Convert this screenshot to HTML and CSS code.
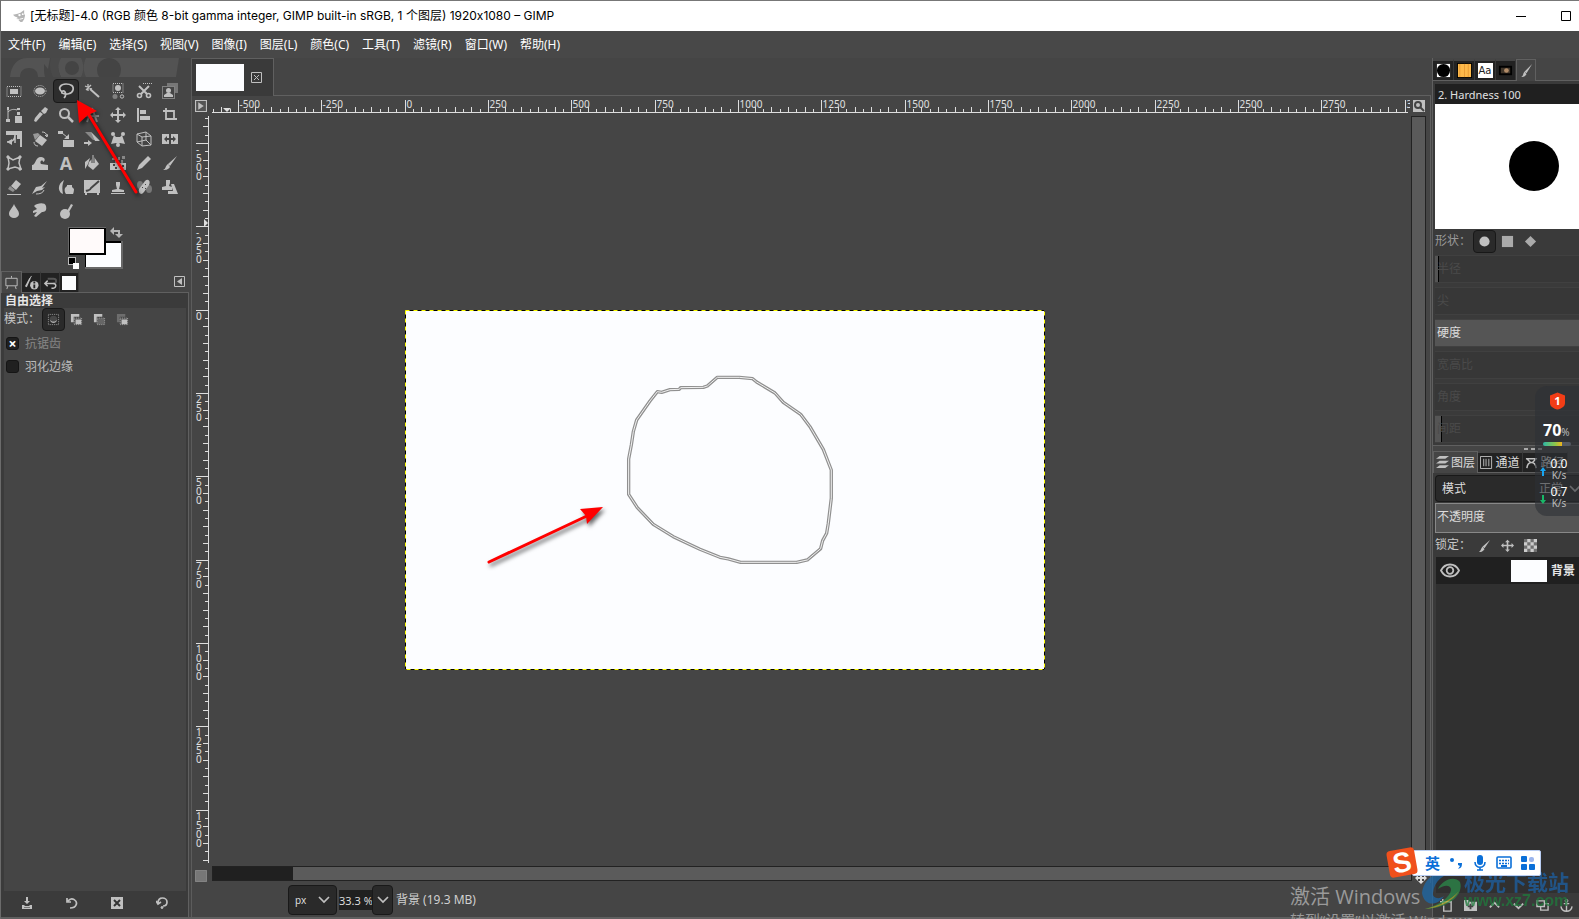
FILE: index.html
```html
<!DOCTYPE html>
<html lang="zh-CN">
<head>
<meta charset="utf-8">
<title>GIMP</title>
<link rel="stylesheet" href="styles.css">
</head>
<body>
<header class="titlebar">
  <svg class="app-icon" viewBox="0 0 14 14"><path d="M0 5l5-1 3-1 4-3v4l1 2-1 4-2 3H8l-3-3H3l2-2-3-1z" fill="#b5b5b5"/><circle cx="7" cy="5.500" r="1.300" fill="#fff"/><circle cx="10.500" cy="4.500" r="1" fill="#fff"/><path d="M1 9l5 1-1 1zM7 10l4-1" stroke="#fff" fill="none"/></svg>
  <h1 class="title">[无标题]-4.0 (RGB 颜色 8-bit gamma integer, GIMP built-in sRGB, 1 个图层) 1920x1080 – GIMP</h1>
  <button class="winbtn" aria-label="最小化"><svg viewBox="0 0 10 10"><path d="M0 5.500h10" stroke="#000"/></svg></button>
  <button class="winbtn" aria-label="最大化"><svg viewBox="0 0 10 10"><path d="M.5.5h9v9h-9z" stroke="#000" fill="none"/></svg></button>
</header>
<nav class="menubar">
  <button>文件(F)</button><button>编辑(E)</button><button>选择(S)</button><button>视图(V)</button><button>图像(I)</button><button>图层(L)</button><button>颜色(C)</button><button>工具(T)</button><button>滤镜(R)</button><button>窗口(W)</button><button>帮助(H)</button>
</nav>

<main class="workspace">
  <aside class="left-dock">
    <svg class="banner" viewBox="0 0 176 19"><path d="M0 19C1 7 8 0 17 0h23l-2 11-4-5c0 6 0 9 1 13h-7c0-6-4-9-9-9s-9 3-9 9zM49 0h120l-3 19H51c-3-7-4-12-2-19z" fill="#535353"/><path d="M41 0h10c-4 7-3 13 0 19h-8c-3-7-4-13-2-19zM71 0h5c-3 6-3 13 0 19h-5c3-6 3-13 0-19z" fill="#494949"/><circle cx="62" cy="10" r="7" fill="#444"/><circle cx="99" cy="12" r="12" fill="#444"/></svg>
    <div class="toolbox">
      <button aria-label="矩形选择"><svg viewBox="0 0 16 16"><path d="M1 3.500h14v10H1z" fill="none" stroke="#c0c0c0" stroke-dasharray="1 1"/><path d="M4 6h8v5H4z"/></svg></button>
      <button aria-label="椭圆选择"><svg viewBox="0 0 16 16"><ellipse cx="8" cy="8" rx="5" ry="3.500"/><ellipse cx="8" cy="8" rx="6" ry="5.500" fill="none" stroke="#c0c0c0" stroke-dasharray="1 1"/></svg></button>
      <button class="active" aria-label="自由选择"><svg viewBox="0 0 16 16" class="line"><path d="M4 9C-1 5 3 1 8 1s8 2 7 6-7 5-11 3c-1-2 2-3 3-1s1 4-1 6" stroke-width="1.700"/></svg></button>
      <button aria-label="模糊选择"><svg viewBox="0 0 16 16" class="line"><path d="M6 6l9 8" stroke-width="2"/><path d="M4 1v7M1 3l7 3M7 2L2 7" stroke-width="1.300"/></svg></button>
      <button aria-label="按颜色选择"><svg viewBox="0 0 16 16"><path d="M3 .5h10v9H3z" fill="none" stroke="#c0c0c0" stroke-dasharray="1 1"/><circle cx="8" cy="5" r="3"/><circle cx="5" cy="13.500" r="2.500" fill="#808080"/><circle cx="12" cy="13.500" r="1.700" class="stroke"/></svg></button>
      <button aria-label="剪刀选择"><svg viewBox="0 0 16 16" class="line"><path d="M3 3l8 8M13 3l-8 8" stroke-width="2"/><circle cx="3.500" cy="12.500" r="2" stroke-width="1.600"/><circle cx="12.500" cy="12.500" r="2" stroke-width="1.600"/><path d="M7 .5h9" stroke-dasharray="1 1"/></svg></button>
      <button aria-label="前景选择"><svg viewBox="0 0 16 16"><path d="M5 0h11v10h-3V3H5z" fill="#777"/><path d="M.5 3.500h12v12H.5z" fill="none" stroke="#c0c0c0" stroke-dasharray="1 1"/><circle cx="6.500" cy="7.500" r="2.500"/><path d="M2 14v-2l3-2h3l3 2v2z"/></svg></button>

      <button aria-label="路径"><svg viewBox="0 0 16 16"><path d="M2 1v13M2 5c3-3 6-3 9-2" class="stroke"/><path d="M1 0h2v3H1zM0 12h4v3H0zM11 1h3v2h-3zM11 5h3v3h-3zM9 9h7v7H9z"/></svg></button>
      <button aria-label="颜色拾取"><svg viewBox="0 0 16 16"><path d="M10 3l3-3 3 2-2 4-2 1-3-3zM8 5l3 2-7 8-2-1 1-3z"/></svg></button>
      <button aria-label="缩放"><svg viewBox="0 0 16 16" class="line"><circle cx="6.500" cy="6.500" r="4.500" stroke-width="2"/><path d="M10 10l5 5" stroke-width="2.500"/></svg></button>
      <button aria-label="测量"><svg viewBox="0 0 16 16" class="line dim"><path d="M8 1L3 15M8 1l5 14M1 9h14" stroke-width="2"/></svg></button>
      <button aria-label="移动"><svg viewBox="0 0 16 16"><path d="M8 0l3 3H9v4h4V5l3 3-3 3V9H9v4h2l-3 3-3-3h2V9H3v2L0 8l3-3v2h4V3H5z"/></svg></button>
      <button aria-label="对齐"><svg viewBox="0 0 16 16"><path d="M1 1h2v14H1zM4 3h6v4H4zM4 9h10v4H4z"/></svg></button>
      <button aria-label="裁剪"><svg viewBox="0 0 16 16" class="line"><path d="M1 4h11v9M4 1v11h11" stroke-width="1.800"/></svg></button>

      <button aria-label="统一变换"><svg viewBox="0 0 16 16"><path d="M0 0h16v4H0zM11 4h5v12h-2V8h-3z"/><path d="M9 3v9M1 11c5 0 8-2 8-7" class="stroke" stroke-width="1.500"/><path d="M6 8v6l-5-3z"/></svg></button>
      <button aria-label="旋转"><svg viewBox="0 0 16 16"><path d="M8 4l7 5-5 6-7-5z"/><path d="M1 3l5-1 2 2-5 5z" fill="#989898"/><path d="M2 11c0 2 1 4 4 4M10 1c3 0 4 1 5 4M13 4l2 2 1-3" class="stroke"/></svg></button>
      <button aria-label="缩放变换"><svg viewBox="0 0 16 16"><path d="M0 0h5v3H0zM5 9h11v7H5zM11 3v5H6z"/><path d="M4 2l5 4" class="stroke"/></svg></button>
      <button aria-label="剪切"><svg viewBox="0 0 16 16"><path d="M1 1h6l8 8H9z" fill="#888"/><path d="M7 1l9 9h-5zM0 11h4V9l4 3-4 3v-2H0z"/></svg></button>
      <button aria-label="透视"><svg viewBox="0 0 16 16"><circle cx="3" cy="3" r="2"/><circle cx="13" cy="3" r="2"/><path d="M4 4l2 2h4l2-2 3 9-5-1-2 1-2-1-5 1z"/><circle cx="8" cy="14" r="2"/></svg></button>
      <button aria-label="三维变换"><svg viewBox="0 0 16 16" class="line"><path d="M1 3l9-2 5 4v9l-9 1-5-4zM1 3l5 3 9-1M6 6v9M10 1v8l5 5M10 9l-9 2"/></svg></button>
      <button aria-label="翻转"><svg viewBox="0 0 16 16"><path d="M0 3h7v10H0zM9 3h7v10H9z"/><path d="M2 8l3-3v2h6V5l3 3-3 3V9H5v2z" fill="#444"/></svg></button>

      <button aria-label="笼变换"><svg viewBox="0 0 16 16" class="line"><path d="M2 2l5 3 7-3-1 6 2 6-6-2-7 2 1-6z" stroke-width="1.500"/><path d="M1 1h2v2H1zM13 1h2v2h-2zM13 13h2v2h-2zM1 13h2v2H1z" fill="#c0c0c0"/></svg></button>
      <button aria-label="变形"><svg viewBox="0 0 16 16"><path d="M0 15v-5c4 0 3-8 9-8 4 0 5 4 2 5 0-3-4-1-2 2l7 1v5z"/></svg></button>
      <button aria-label="文字" class="letter">A</button>
      <button aria-label="油漆桶"><svg viewBox="0 0 16 16"><path d="M5 7l5-5 5 7-6 6-5-4z"/><path d="M9 8V0" stroke="#454545" stroke-width="3"/><path d="M9 8V0" stroke="#c0c0c0"/><path d="M6 3L1 7v7l3-5z"/></svg></button>
      <button aria-label="渐变"><svg viewBox="0 0 16 16"><path d="M0 8h16v7H0z"/><path d="M2 3h3v2H2zM8 2h2v3H8zM12 1h3v3h-3zM5 5h3v3H5zM11 5h2v3h-2z" fill="#888"/><path d="M3 9h2v2H3zM8 9h2v2H8zM12 10h2v2h-2zM5 12h2v2H5z" fill="#454545"/></svg></button>
      <button aria-label="铅笔"><svg viewBox="0 0 16 16"><path d="M12 1l3 3-9 9-5 2 2-5z"/></svg></button>
      <button aria-label="画笔"><svg viewBox="0 0 16 16"><path d="M15 1L6 9l2 2zM6 9l2 3c-2 3-5 3-7 3 3-1 2-4 5-6z"/></svg></button>

      <button aria-label="橡皮擦"><svg viewBox="0 0 16 16"><path d="M10 1l5 4-5 6-5-4z"/><path d="M4 7l5 4-2 2-5-3z" fill="#909090"/><path d="M1 15h14v1H1z"/></svg></button>
      <button aria-label="喷枪"><svg viewBox="0 0 16 16"><path d="M15 2L9 7l-5 1-4 7 5-3 5-1 3-3-3 1z"/><path d="M4 15c4 0 7-1 8-4" class="stroke"/></svg></button>
      <button aria-label="墨水"><svg viewBox="0 0 16 16"><path d="M6 1C1 4-1 10 3 14l2 1c-1-5-1-9 1-14z"/><path d="M7 9l2-2V6h5v2l2 2c0 3-1 5-1 5H8c-1-1-2-4-1-6z"/></svg></button>
      <button aria-label="MyPaint 画笔"><svg viewBox="0 0 16 16"><path d="M0 1h16v13H0zM1 14h2v2H1zM13 14h2v2h-2z"/><path d="M15 2L7 9c-1 3-3 2-5 3" stroke="#454545" stroke-width="2" fill="none"/></svg></button>
      <button aria-label="仿制"><svg viewBox="0 0 16 16"><path d="M6 3h4v3L9 10l5 1v2H2v-2l5-1-1-4zM1 14h14v1H1z"/></svg></button>
      <button aria-label="修复"><svg viewBox="0 0 16 16"><ellipse cx="4" cy="6" rx="3" ry="4" fill="#777"/><ellipse cx="13" cy="10" rx="3" ry="4" fill="#777"/><path d="M9 2c3-3 6 0 4 4L8 13c-3 4-6 1-5-3z"/><path d="M6 8h1v1H6zM9 5h1v1H9zM9 9h1v1H9z" fill="#444"/></svg></button>
      <button aria-label="透视仿制"><svg viewBox="0 0 16 16"><path d="M4 1h4v3L7 7l3 1v3H0V8l4-1zM9 5h3l4 10H6v-3h5z"/></svg></button>

      <button aria-label="模糊"><svg viewBox="0 0 16 16"><path d="M8 1c2 5 5 6 5 10a5 4 0 0 1-10 0c0-4 3-5 5-10z"/></svg></button>
      <button aria-label="涂抹"><svg viewBox="0 0 16 16"><path d="M2 3c3-3 11-4 12 0 1 5-1 6-4 6l-6 5-2-1 3-4-4 1v-2l4-2z"/></svg></button>
      <button aria-label="减淡"><svg viewBox="0 0 16 16"><circle cx="7" cy="11" r="5"/><path d="M9 8l4-7 2 1-4 7z"/></svg></button>
    </div>
    <div class="colors">
      <svg viewBox="0 0 56 43"><path d="M17 14h38v28H17z" fill="#686868"/><path d="M17 14h36v26H17z" fill="#000"/><path d="M18 16h35v24H18z" fill="#fcfdff"/><path d="M0 0h38v28H0z" fill="#686868"/><path d="M1 1h37v27H1z" fill="#000"/><path d="M2 2h34v24H2z" fill="#fffafa"/><path d="M0 30h8v8H0z" fill="#bbb"/><path d="M1 31h6v6H1z" fill="#000"/><path d="M5 36h6v6H5z" fill="#fff"/><path d="M45 4h6v4" stroke="#b5b5b5" stroke-width="2" fill="none"/><path d="M46 0v8l-4-4zM47 7h8l-4 4z" fill="#b5b5b5"/></svg>
    </div>
    <div class="tabs tool-tabs">
      <button class="tab on" aria-label="工具选项"><svg viewBox="0 0 16 16" class="line"><path d="M2 3.500h12v8H2zM8 1v2M4 12l-1 3M12 12l1 3"/></svg></button>
      <button class="tab" aria-label="设备状态"><svg viewBox="0 0 16 16"><path d="M1 12l5-9 1 1-4 9z"/><path d="M8 1L5 6" class="stroke"/><circle cx="11" cy="11" r="4.500"/><path d="M10 10h2v4h-2zM10 7h2v2h-2z" fill="#222"/></svg></button>
      <button class="tab" aria-label="撤消历史"><svg viewBox="0 0 16 16" class="line"><path d="M5 4h6c4 0 4 5 0 5" stroke="#555" stroke-width="2"/><path d="M5 6L2 9l3 3M3 9h8c4 0 3 5 0 5H9" stroke-width="1.600"/></svg></button>
      <button class="tab" aria-label="图像"><i class="white-swatch"></i></button>
      <button class="tab-menu" aria-label="配置此标签页"><svg viewBox="0 0 11 11"><path d="M.5.5h10v10H.5z" fill="none" stroke="#c0c0c0"/><path d="M8 2v7L3 5.500z"/></svg></button>
    </div>
    <section class="options">
      <h2>自由选择</h2>
      <div class="options-body">
      <div class="mode-row"><span>模式：</span>
        <button class="sq active" aria-label="替换"><svg viewBox="0 0 14 14"><path d="M1.500 1.500h11v11h-11z" fill="none" stroke="#999" stroke-dasharray="1 1"/><circle cx="7" cy="7" r="4" fill="#484848"/><path d="M3 7c1 5 7 5 8 0-2 3-6 3-8 0z" fill="#aaa"/></svg></button>
        <button class="sq" aria-label="添加"><svg viewBox="0 0 14 14"><path d="M1 1h9v3H4v6H1z"/><path d="M4.500 5.500h8v7h-8z" fill="#555" stroke="#aaa" stroke-dasharray="1 1"/><path d="M6 7h6v5H6z"/></svg></button>
        <button class="sq" aria-label="减去"><svg viewBox="0 0 14 14"><path d="M1 1h9v3H4v6H1z"/><path d="M4.500 5.500h8v7h-8z" fill="#666" stroke="#999" stroke-dasharray="1 1"/></svg></button>
        <button class="sq" aria-label="相交"><svg viewBox="0 0 14 14"><path d="M1 1h9v3H4v6H1z" fill="#6d6d6d"/><path d="M4.500 5.500h8v7h-8z" fill="#555" stroke="#aaa" stroke-dasharray="1 1"/><path d="M6 7h6v5H6z"/></svg></button>
      </div>
      <label class="check faded"><input type="checkbox" checked>抗锯齿</label>
      <label class="check"><input type="checkbox">羽化边缘</label>
      </div>
    </section>
    <div class="left-actions">
      <button aria-label="保存"><svg viewBox="0 0 12 12"><path d="M5 0h2v4h2L6 7 3 4h2zM1 8h2l1 1h4l1-1h2v4H1z"/><path d="M3 10h6v1H3z" fill="#777"/></svg></button>
      <button aria-label="恢复"><svg viewBox="0 0 12 12" class="line"><path d="M1 1v4h4M2 4c4-5 10 0 8 4-1 3-4 3-6 3" stroke-width="1.700"/></svg></button>
      <button aria-label="删除"><svg viewBox="0 0 12 12"><path d="M0 0h12v12H0z"/><path d="M3 3l6 6M9 3L3 9" stroke="#333" stroke-width="2"/></svg></button>
      <button aria-label="重置"><svg viewBox="0 0 12 12" class="line"><path d="M0 4l2 3 3-2M2 6c0-7 9-6 9-1 0 3-2 4-4 4" stroke-width="1.700"/><circle cx="6" cy="10.500" r="1" fill="#c0c0c0"/></svg></button>
    </div>
    <svg class="arrow-tool" viewBox="0 0 80 110"><g class="shadow"><path d="M16 17l47 77" class="red-line"/><path d="M4 2l20 11-9 4-9 8z" class="red"/></g></svg>
  </aside>

  <section class="center">
    <div class="image-tabs">
      <div class="image-tab"><span class="thumb"></span><button aria-label="关闭"><svg viewBox="0 0 11 11" class="line"><path d="M.5.5h10v10H.5zM3 3l5 5M8 3L3 8"/></svg></button></div>
      <div class="rest"></div>
    </div>
    <div class="view">
      <button class="corner" aria-label="图像菜单"><svg viewBox="0 0 11 11"><path d="M.5.5h10v10H.5z" fill="#555" stroke="#c0c0c0"/><path d="M3 2v7l5-3.500z"/></svg></button>
      <svg class="hruler" id="hruler"></svg>
      <button class="corner zoomfit" aria-label="随窗口缩放"><svg viewBox="0 0 12 12"><path d="M0 0h12v12H0z"/><circle cx="5" cy="5" r="3" fill="none" stroke="#444" stroke-width="2"/><path d="M7 7l4 4" stroke="#444" stroke-width="2"/></svg></button>
      <svg class="vruler" id="vruler"></svg>
      <div class="canvas">
        <svg class="image" viewBox="0 0 640 360">
          <path d="M0 0h640v360H0z" fill="#fcfdff"/>
          <path d="M.5.5h639v359H.5z" fill="none" stroke="#000"/>
          <path d="M.5.5h639v359H.5z" fill="none" stroke="#ff0" stroke-dasharray="4 4"/>
          <defs><path id="lasso" d="M562 95L575 97 600 89 628 88 632 83 700 82 712 78 742 52 808 52 848 56 860 66 915 99 940 127 992 163 1020 200 1060 268 1084 330V415L1075 490 1070 520 1058 542 1052 566 1012 600 980 607H812L775 597 750 592 690 568 610 530 550 493 502 443 476 403V297L484 255 490 215 500 180 540 123z"/></defs>
          <g transform="translate(65 50) scale(.3333)" fill="none" stroke-linejoin="round">
            <use href="#lasso" stroke="#909090" stroke-width="10"/>
            <use href="#lasso" stroke="#f2f2f2" stroke-width="3"/>
          </g>
          <g class="shadow"><path d="M84 252l100-47" class="red-line"/><path d="M198 197l-16 17-1-8-6-7z" class="red"/></g>
        </svg>
      </div>
      <div class="vscroll"></div>
      <button class="corner" aria-label="快速蒙版"><svg viewBox="0 0 12 12"><path d="M.5.5h11v11H.5z" fill="#777" stroke="#aaa" stroke-dasharray="1 1"/></svg></button>
      <div class="hscroll"><span></span></div>
      <button class="corner nav" aria-label="导航"><svg viewBox="0 0 12 12"><path d="M6 0l3 3H7v2h2V3l3 3-3 3V7H7v2h2l-3 3-3-3h2V7H3v2L0 6l3-3v2h2V3H3z" fill="#ddd"/></svg></button>
    </div>
    <div class="statusbar">
      <span class="combo unit"><select aria-label="单位"><option>px</option></select><svg viewBox="0 0 12 8" class="line"><path d="M1 1l5 5 5-5" stroke-width="1.700"/></svg></span>
      <input class="zoom" aria-label="缩放" value="33.3 %">
      <button class="zoomdrop" aria-label="缩放列表"><svg viewBox="0 0 12 8" class="line"><path d="M1 1l5 5 5-5" stroke-width="1.700"/></svg></button>
      <span class="status">背景 (19.3 MB)</span>
    </div>
  </section>

  <aside class="right-dock">
    <div class="tabs brush-tabs">
      <button class="tab" aria-label="画笔"><svg viewBox="0 0 16 16"><path d="M1 1h14v14H1z" fill="#fff"/><circle cx="8" cy="8" r="7" fill="#000"/></svg></button>
      <button class="tab" aria-label="图案"><svg viewBox="0 0 16 16"><path d="M0 0h16v16H0z" fill="#000"/><path d="M1 1h14v14H1z" fill="#fdb94a"/><path d="M3 1v14M8 1v14M12 1v14" stroke="#e89a35"/></svg></button>
      <button class="tab aa" aria-label="字体"><span>Aa</span></button>
      <button class="tab narrow" aria-label="文档历史"><svg viewBox="0 0 16 16"><path d="M1 3h14v10H1z" fill="#000"/><path d="M3 5h10v6H3z" fill="#41362a"/><circle cx="9" cy="8" r="2.500" fill="#b28c68"/></svg></button>
      <button class="tab on narrow" aria-label="画笔编辑器"><svg viewBox="0 0 16 16"><path d="M14 1L6 9l2 2zM6 9l2 3c-2 3-4 3-6 3 3-1 2-4 4-6z"/></svg></button>
    </div>
    <section class="brush">
      <input class="brush-name" aria-label="画笔名称" value="2. Hardness 100">
      <div class="preview"><i></i></div>
      <div class="mode-row shape"><span>形状：</span>
        <button class="sq active" aria-label="圆"><svg viewBox="0 0 14 14"><circle cx="7" cy="7" r="5.500"/></svg></button>
        <button class="sq" aria-label="方"><svg viewBox="0 0 14 14"><path d="M1 1h12v12H1z" fill="#aaa"/></svg></button>
        <button class="sq" aria-label="菱形"><svg viewBox="0 0 14 14"><path d="M7 1l6 6-6 6-6-6z" fill="#aaa"/></svg></button>
      </div>
      <div class="slider off"><label for="s1">半径</label><input id="s1" type="range" style="--fill:4px"></div>
      <div class="slider off"><label for="s2">尖</label><input id="s2" type="range"></div>
      <div class="slider full"><label for="s3">硬度</label><input id="s3" type="range" value="100"></div>
      <div class="slider off"><label for="s4">宽高比</label><input id="s4" type="range"></div>
      <div class="slider off"><label for="s5">角度</label><input id="s5" type="range"></div>
      <div class="slider off"><label for="s6">间距</label><input id="s6" type="range" style="--fill:7px"></div>
    </section>
    <div class="grip"><i></i><i></i><i></i></div>
    <div class="tabs layer-tabs">
      <button class="tab on"><svg viewBox="0 0 14 14"><path d="M4 0h10l-4 3H0zM4 5h10l-4 3H0zM4 10h10l-4 3H0z"/></svg>图层</button>
      <button class="tab"><svg viewBox="0 0 14 14" class="line"><path d="M.5.5h12v13H.5zM4 3v8M6.500 3v8M9.500 3v8"/></svg>通道</button>
      <button class="tab"><svg viewBox="0 0 14 14" class="line"><path d="M1 3h12M2 13c1-8 9-8 10 0M2 3l4 4M12 3L8 7" stroke-width="1.600"/></svg>路径</button>
    </div>
    <section class="layers">
      <label class="combo mode"><span>模式</span><select><option>正常</option></select><svg viewBox="0 0 12 8" class="line"><path d="M1 1l5 5 5-5" stroke-width="1.700"/></svg></label>
      <div class="slider opacity"><label for="op">不透明度</label><input id="op" type="range" value="100"></div>
      <div class="mode-row lock"><span>锁定：</span>
        <button class="sq" aria-label="锁定像素"><svg viewBox="0 0 14 14"><path d="M13 1L5 8l2 2zM5 8l2 3c-2 3-4 3-6 3 2-1 2-4 4-6z"/></svg></button>
        <button class="sq" aria-label="锁定位置"><svg viewBox="0 0 16 16"><path d="M8 1l3 3H9v3h4V5l3 3-3 3V9H9v4h2l-3 3-3-3h2V9H3v2L0 8l3-3v2h4V4H5z"/></svg></button>
        <button class="sq" aria-label="锁定透明"><svg viewBox="0 0 12 12"><path d="M0 0h12v12H0z" fill="#ccc"/><path d="M0 0h3v3H0zM6 0h3v3H6zM3 3h3v3H3zM9 3h3v3H9zM0 6h3v3H0zM6 6h3v3H6zM3 9h3v3H3zM9 9h3v3H9z" fill="#707070"/></svg></button>
      </div>
      <div class="layer-list">
        <div class="layer"><svg class="eye line" viewBox="0 0 20 14"><path d="M1 7C5-1 15-1 19 7 15 15 5 15 1 7z" stroke-width="1.800"/><circle cx="10" cy="7" r="3.300" stroke-width="1.800"/></svg><span class="layer-thumb"></span><b>背景</b></div>
      </div>
      <div class="layer-actions">
        <button aria-label="新建图层"><svg viewBox="0 0 14 14" class="line"><path d="M5 3h7v10H4V7M3 0v6M0 3h6" stroke-width="1.500"/></svg></button>
        <button aria-label="新建组"><svg viewBox="0 0 14 14"><path d="M0 1h5l1 2h8v10H0z"/><path d="M7 5v6M4 8h6" stroke="#444" stroke-width="2"/></svg></button>
        <button aria-label="升高"><svg viewBox="0 0 14 14" class="line"><path d="M2 9l5-5 5 5" stroke-width="2"/></svg></button>
        <button aria-label="降低"><svg viewBox="0 0 14 14" class="line"><path d="M2 5l5 5 5-5" stroke-width="2"/></svg></button>
        <button aria-label="复制"><svg viewBox="0 0 14 14" class="line"><path d="M1 2h8v6H1zM5 8v4h8V5H9" stroke-width="1.500"/></svg></button>
        <button aria-label="合并"><svg viewBox="0 0 14 14" class="line"><path d="M7 3v10M1 8c1 7 11 7 12 0M4 5h6" stroke-width="1.500"/><circle cx="7" cy="2" r="1.500"/></svg></button>
      </div>
    </section>
  </aside>
</main>

<div class="activate"><p>激活 Windows</p><p class="small">转到“设置”以激活 Windows。</p></div>
<div class="watermark">
  <svg viewBox="0 0 44 42"><path d="M2 24C4 8 18 0 38 2 24 4 14 12 13 24c-1 5 6 7 11 3C17 38 4 37 2 24z" fill="#1c68a8"/><path d="M40 13c4 12-10 26-35 27 15-4 25-12 26-19 0-6-8-5-13-1 4-9 16-14 22-7z" fill="#2b8a4a"/><path d="M5 40c15-1 28-8 34-18-8 9-18 14-34 18z" fill="#b8ab2a"/></svg>
  <div><p class="cn">极光下载站</p><p class="url">www.xz7.com</p></div>
</div>
<div class="ime">
  <span class="logo">S</span>
  <div class="ime-bar"><b>英</b>
    <svg viewBox="0 0 16 16"><circle cx="4" cy="5" r="2"/><path d="M10 8h4c0 4-1 5-4 6l2-3-2-1z"/></svg>
    <svg viewBox="0 0 16 16"><rect x="5" y="0" width="6" height="10" rx="3"/><path d="M3 7c0 7 10 7 10 0M8 12v3M5 15h6" fill="none" stroke="#0a6fd8" stroke-width="1.600"/></svg>
    <svg viewBox="0 0 16 16"><rect x="1" y="2" width="14" height="11" rx="1" fill="none" stroke="#0a6fd8" stroke-width="1.600"/><path d="M3 5.500h10M3 8.500h10" fill="none" stroke="#0a6fd8" stroke-width="1.600" stroke-dasharray="2 1"/><path d="M5 10h6v2H5z"/></svg>
    <svg viewBox="0 0 16 16"><rect x="1" y="1" width="6" height="6" rx="1"/><rect x="9" y="2" width="5" height="5" rx="2" fill="#9bb5ed"/><rect x="1" y="9" width="6" height="6" rx="1"/><rect x="9" y="9" width="6" height="6" rx="1"/></svg>
  </div>
</div>
<div class="monitor">
  <svg class="shield" viewBox="0 0 16 18"><path d="M8 0l8 3v8c0 4-4 6-8 7-4-1-8-3-8-7V3z" fill="#f23d16"/><text x="8" y="13" text-anchor="middle">1</text></svg>
  <p class="load"><b>70</b>%</p>
  <span class="bar"></span>
  <div class="net"><svg viewBox="0 0 6 9"><path d="M3 0l3 4H4v5H2V4H0z" fill="#18a5f0"/></svg><p>0.0<small>K/s</small></p></div>
  <div class="net"><svg viewBox="0 0 6 9"><path d="M3 9l3-4H4V0H2v5H0z" fill="#18b868"/></svg><p>0.7<small>K/s</small></p></div>
</div>
<script src="rulers.js"></script>
</body>
</html>
```
FILE: rulers.js
```js
const NS = 'http://www.w3.org/2000/svg';
const SCALE = 1 / 3;

function add(parent, name, attrs, text) {
  const el = document.createElementNS(NS, name);
  for (const key in attrs) el.setAttribute(key, attrs[key]);
  if (text !== undefined) el.textContent = text;
  parent.appendChild(el);
}

function tickLength(unit) {
  if (unit % 250 === 0) return 12;
  return unit % 50 === 0 ? 5 : 3;
}

function drawHorizontal(svg, zero) {
  let d = 'M0 16.5H1196';
  for (let u = -575; u <= 3000; u += 25) {
    const x = Math.floor(zero + u * SCALE) + 0.5;
    d += `M${x} ${16 - tickLength(u)}V16`;
    if (u % 250 === 0) add(svg, 'text', { x: x + 1, y: 12 }, u);
  }
  add(svg, 'path', { d });
  add(svg, 'path', { d: 'M11 12h8l-4 4z', class: 'pointer' });
}

function drawVertical(svg, zero) {
  let d = 'M16.5 0V747';
  for (let u = -575; u <= 1650; u += 25) {
    const y = Math.floor(zero + u * SCALE) + 0.5;
    d += `M${16 - tickLength(u)} ${y}H16`;
    if (u % 250 === 0) {
      [...String(u)].forEach((c, i) => add(svg, 'text', { x: 4, y: y + 9 + i * 9 }, c));
    }
  }
  add(svg, 'path', { d });
  add(svg, 'path', { d: 'M12 103v8l4-4z', class: 'pointer' });
}

drawHorizontal(document.getElementById('hruler'), 193);
drawVertical(document.getElementById('vruler'), 194);
```
FILE: styles.css
```css
* { box-sizing: border-box; margin: 0; padding: 0; }
body {
  height: 100vh; overflow: hidden; display: flex; flex-direction: column; position: relative;
  border-top: 1px solid #777; border-left: 1px solid #6b6b6b;
  background: #454545; color: #dcdcdc;
  font: 12px/16px "Noto Sans", "Noto Sans CJK SC", sans-serif;
}
button, input, select { font: inherit; color: inherit; background: none; border: 0; appearance: none; outline: 0; border-radius: 0; }
svg { display: block; fill: #c0c0c0; }
svg.line, .stroke { fill: none; stroke: #c0c0c0; }
svg.dim { stroke: #888; }
.shadow { filter: drop-shadow(2px 3px 2px rgba(0, 0, 0, .6)); }
.red { fill: #f00; }
.red-line { stroke: #f00; stroke-width: 3; fill: none; stroke-linecap: round; }

.titlebar { display: flex; align-items: center; height: 30px; padding-left: 12px; background: #fff; color: #000; flex: none; }
.app-icon { width: 13px; height: 13px; }
.title { flex: 1; margin-left: 4px; font: 400 12px/16px Inter, "Noto Sans CJK SC", sans-serif; white-space: nowrap; }
.winbtn { width: 45px; height: 28px; display: grid; place-items: center; }
.winbtn:last-child { margin-right: -9px; }
.winbtn svg { width: 10px; height: 10px; }

.menubar { display: flex; gap: 13px; height: 27px; padding-left: 7px; background: #484848; color: #fff; flex: none; }
.menubar button { white-space: nowrap; }

.workspace { flex: 1; min-height: 0; display: flex; border-bottom: 2px solid #606060; }

.left-dock { position: relative; flex: 0 0 188px; display: flex; flex-direction: column; }
.banner { width: 176px; height: 19px; margin-left: 9px; }
.toolbox { display: grid; grid-template-columns: repeat(7, 26px); grid-auto-rows: 24px; margin-top: 2px; }
.toolbox button { display: grid; place-items: center; border-radius: 4px; }
.toolbox svg { width: 16px; height: 16px; }
.toolbox .active { background: #2d2d2d; border: 1px solid #191919; }
.toolbox .letter { font: bold 18px/24px "Open Sans", sans-serif; color: #c0c0c0; }
.colors { padding: 4px 0 1px 67px; }
.colors svg { width: 56px; height: 43px; }
.arrow-tool { position: absolute; left: 72px; top: 40px; width: 80px; height: 110px; pointer-events: none; }

.tabs { display: flex; height: 22px; flex: none; border-bottom: 1px solid #606060; }
.tab { display: flex; align-items: center; justify-content: center; width: 20px; height: 21px; background: #222; border-top: 2px solid #454545; border-right: 1px solid #383838; }
.tab svg { width: 15px; height: 15px; flex: none; }
.tab.on { height: 22px; background: #454545; border: 1px solid #606060; border-bottom: 0; }
.white-swatch { width: 14px; height: 14px; background: #fcfdff; }
.tool-tabs .tab { width: 19px; }
.tool-tabs .tab.on { width: 21px; }
.tab-menu { margin-left: auto; padding: 0 4px 0 0; }
.tab-menu svg { width: 11px; height: 11px; }
.options { flex: 1; display: flex; flex-direction: column; border-right: 1px solid #606060; padding: 1px 2px 0 3px; background: #3b3b3b; }
.options h2 { font-size: 12px; line-height: 14px; padding-left: 1px; color: #e6e6e6; }
.options-body { flex: 1; background: #454545; }
.mode-row { display: flex; align-items: center; height: 22px; color: #c8c8c8; }
.mode-row span { width: 38px; white-space: nowrap; }
.sq { width: 23px; height: 23px; display: grid; place-items: center; border-radius: 4px; }
.sq svg { width: 13px; height: 13px; }
.sq.active { background: #2a2a2a; border: 1px solid #181818; }
.check { display: flex; align-items: center; gap: 6px; height: 23px; padding-left: 2px; color: #bbb; }
.mode-row + .check { margin-top: 2px; }
.check.faded { color: #858585; }
.check input { width: 13px; height: 13px; border-radius: 3px; background: #202020; border: 1px solid #151515; display: grid; place-items: center; }
.check input:checked::after { content: "×"; color: #fff; font: bold 14px/11px "Noto Sans", sans-serif; }
.left-actions { display: grid; grid-template-columns: repeat(4, 45px); align-items: center; justify-items: center; height: 26px; padding: 0 0 2px 3px; background: #3b3b3b; border-right: 1px solid #606060; }
.left-actions svg { width: 12px; height: 12px; }

.center { flex: 1; min-width: 0; display: flex; flex-direction: column; margin-left: 2px; border-left: 1px solid #5c5c5c; }
.image-tabs { display: flex; height: 38px; flex: none; }
.image-tab { display: flex; align-items: center; gap: 7px; width: 82px; padding-left: 4px; background: #3a3a3a; border: 1px solid #606060; border-width: 1px 1px 0 0; }
.thumb { width: 48px; height: 27px; background: #fcfdff; }
.image-tab svg { width: 11px; height: 11px; }
.image-tabs .rest { flex: 1; border-bottom: 1px solid #606060; }
.view { flex: 1; min-height: 0; display: grid; grid-template: 20px minmax(0, 1fr) 17px / 20px minmax(0, 1fr) 20px; border-right: 1px solid #606060; }
.corner { padding: 4px 3px; }
.corner svg { width: 12px; height: 12px; }
.corner.nav { padding-top: 6px; padding-left: 5px; }
.hruler, .vruler { width: 100%; height: 100%; overflow: hidden; }
.hruler path, .vruler path { stroke: #dedede; fill: none; }
.hruler .pointer, .vruler .pointer { fill: #dedede; stroke: none; }
.hruler text, .vruler text { font: 10px "Noto Sans", sans-serif; fill: #e0e0e0; }
.canvas { position: relative; overflow: hidden; }
.image { position: absolute; left: 193px; top: 194px; width: 640px; height: 360px; }
.vscroll { margin: 0 4px 0 1px; border: 1px solid #222; background: #5a5a5a; }
.hscroll { margin: 0 -2px 2px 0; background: #202020; border: 1px solid #222; padding-left: 80px; }
.hscroll span { display: block; height: 100%; background: #5b5b5b; }
.statusbar { display: flex; align-items: center; height: 34px; padding-left: 96px; flex: none; font-size: 12px; }
.combo { position: relative; display: flex; align-items: center; background: #2a2a2a; border: 1px solid #191919; border-radius: 4px; }
.combo svg, .zoomdrop svg { width: 12px; height: 8px; flex: none; }
.unit { width: 49px; height: 30px; padding: 0 6px; font-size: 10px; }
.unit select { flex: 1; min-width: 0; }
.zoom { width: 33px; height: 20px; margin-left: 2px; background: #202020; text-align: right; font-size: 11px; }
.zoomdrop { width: 21px; height: 30px; display: grid; place-items: center; background: #2a2a2a; border: 1px solid #191919; border-radius: 4px; }
.status { margin-left: 3px; color: #d0d0d0; }

.right-dock { flex: 0 0 147px; margin-left: 1px; border-left: 1px solid #606060; display: flex; flex-direction: column; overflow: hidden; white-space: nowrap; background: #3a3a3a; }
.brush-tabs { height: 23px; padding-top: 1px; background: #454545; }
.brush-tabs .tab { width: 21px; }
.brush-tabs .tab.narrow { width: 20px; }
.aa span { width: 15px; height: 15px; background: #fff; color: #222; font: 10px/15px "DejaVu Sans", sans-serif; text-align: center; }
.brush { padding: 3px 0 2px 2px; border-bottom: 1px solid #606060; }
.brush-name { display: block; width: 100%; height: 20px; padding-left: 3px; background: #202020; color: #e0e0e0; font-size: 11px; }
.preview { height: 125px; padding: 37px 0 0 74px; background: #fff; }
.preview i { display: block; width: 50px; height: 50px; border-radius: 50%; background: #000; }
.shape { height: 24px; margin-bottom: 2px; color: #999; }
.slider { display: grid; align-items: center; height: 28px; margin-bottom: 4px; }
.slider:last-child { margin-bottom: 0; }
.slider label, .slider input { grid-area: 1 / 1; }
.slider label { z-index: 1; padding-left: 2px; }
.slider input { --fill: 0px; width: 100%; height: 28px; border: 1px solid #404040; border-width: 1px 0; background: linear-gradient(90deg, #555 calc(var(--fill) - 1px), #000 calc(var(--fill) - 1px) var(--fill), #373737 var(--fill)); }
.slider input::-webkit-slider-thumb { appearance: none; width: 1px; height: 1px; }
.slider.off label { color: #4a4a4a; }
.slider.full input { background: #555; }
.grip { display: flex; gap: 3px; height: 5px; padding: 2px 0 0 91px; background: #454545; flex: none; }
.grip i { width: 4px; height: 2px; background: #aaa; }
.layer-tabs { background: #454545; }
.layer-tabs .tab { width: 45px; gap: 2px; flex: none; }
.layer-tabs svg { width: 13px; height: 13px; }
.layers { flex: 1; min-height: 0; display: flex; flex-direction: column; padding: 2px 0 0 2px; }
.mode { height: 27px; padding-left: 6px; border-right: 0; border-radius: 4px 0 0 4px; flex: none; }
.mode select { width: 30px; margin-left: auto; color: #ccc; }
.mode svg { margin-right: -2px; }
.opacity { height: 30px; margin: 1px 0 0; flex: none; }
.opacity input { height: 30px; background: #555; border: 1px solid #888; border-right: 0; }
.opacity label { line-height: 18px; padding-bottom: 2px; }
.lock { height: 24px; flex: none; }
.layer-list { flex: 1; margin: 0 0 0 1px; background: #303030; }
.layer { display: flex; align-items: center; height: 27px; padding-left: 4px; background: #202020; }
.eye { width: 20px; height: 15px; }
.layer-thumb { width: 36px; height: 22px; margin: 0 4px 0 51px; background: #fcfdff; }
.layer b { color: #e6e6e6; }
.layer-actions { display: flex; align-items: center; gap: 11px; height: 24px; padding: 0 0 0 5px; flex: none; }
.layer-actions svg { width: 13px; height: 13px; }

.activate { position: absolute; left: 1289px; top: 883px; color: #9a9a9a; white-space: nowrap; font: 20px/26px "Open Sans", "Noto Sans CJK SC", sans-serif; }
.activate .small { font-size: 15px; line-height: 20px; }
.watermark { position: absolute; right: 10px; bottom: 8px; display: flex; opacity: .75; white-space: nowrap; }
.watermark svg { width: 44px; height: 42px; }
.cn { font: bold 21px/24px "Noto Sans CJK SC", sans-serif; color: #1c61a5; }
.url { font: bold 16px/16px "Liberation Sans", sans-serif; color: #1f7a3c; }
.ime { position: absolute; right: 38px; bottom: 43px; display: flex; align-items: center; }
.logo { width: 28px; height: 27px; margin-right: -4px; z-index: 1; border-radius: 4px; background: #f0501c; color: #fff; font: bold 28px/27px "Liberation Sans", sans-serif; text-align: center; transform: rotate(-10deg); }
.ime-bar { display: flex; align-items: center; gap: 8px; height: 26px; padding: 0 4px 0 12px; border: 1px solid #b9cdf2; border-radius: 2px; background: #fff; color: #0a6fd8; }
.ime-bar b { font: bold 15px/22px "Noto Sans CJK SC", sans-serif; }
.ime-bar svg { width: 16px; height: 16px; fill: #0a6fd8; }
.monitor { position: absolute; right: 0; top: 385px; width: 44px; height: 130px; padding-left: 8px; border-radius: 12px 0 0 12px; background: rgba(45, 48, 54, .6); color: #fff; }
.shield { width: 15px; height: 18px; margin: 6px 0 0 7px; }
.shield text { font: bold 12px "Noto Sans", sans-serif; fill: #fff; }
.load { margin-top: 10px; font-size: 10px; line-height: 20px; color: #bbb; }
.load b { font-size: 16px; color: #fff; }
.bar { display: block; width: 28px; height: 4px; border-radius: 2px; background: linear-gradient(90deg, #2cb8a8, #8cc54b 12px, #f0b41c 19px, #555a64 19px); }
.net { display: flex; align-items: center; gap: 2px; height: 28px; margin-left: -3px; }
.net svg { width: 6px; height: 9px; margin-top: 5px; }
.bar + .net { margin-top: 9px; }
.net p { font: 12px/13px "Noto Sans", sans-serif; width: 22px; text-align: center; }
.net small { display: block; font-size: 10px; line-height: 11px; color: #bbb; }
```
